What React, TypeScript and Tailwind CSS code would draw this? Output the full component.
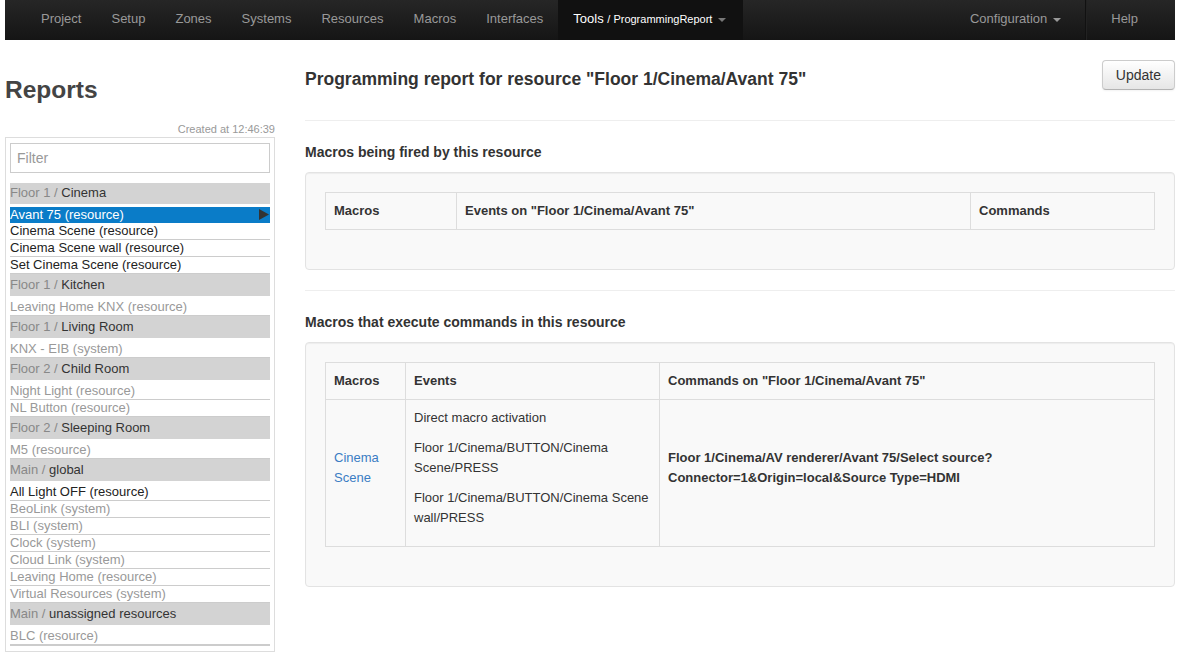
import React from "react";

type Item = { label: string; dark?: boolean; selected?: boolean };
type Group = { prefix: string; name: string; items: Item[] };

const groups: Group[] = [
    {
        prefix: "Floor 1",
        name: "Cinema",
        items: [
            { label: "Avant 75 (resource)", selected: true },
            { label: "Cinema Scene (resource)", dark: true },
            { label: "Cinema Scene wall (resource)", dark: true },
            { label: "Set Cinema Scene (resource)", dark: true },
        ],
    },
    { prefix: "Floor 1", name: "Kitchen", items: [{ label: "Leaving Home KNX (resource)" }] },
    { prefix: "Floor 1", name: "Living Room", items: [{ label: "KNX - EIB (system)" }] },
    {
        prefix: "Floor 2",
        name: "Child Room",
        items: [{ label: "Night Light (resource)" }, { label: "NL Button (resource)" }],
    },
    { prefix: "Floor 2", name: "Sleeping Room", items: [{ label: "M5 (resource)" }] },
    {
        prefix: "Main",
        name: "global",
        items: [
            { label: "All Light OFF (resource)", dark: true },
            { label: "BeoLink (system)" },
            { label: "BLI (system)" },
            { label: "Clock (system)" },
            { label: "Cloud Link (system)" },
            { label: "Leaving Home (resource)" },
            { label: "Virtual Resources (system)" },
        ],
    },
    { prefix: "Main", name: "unassigned resources", items: [{ label: "BLC (resource)" }] },
];

const navLeft = ["Project", "Setup", "Zones", "Systems", "Resources", "Macros", "Interfaces"];

const Caret: React.FC<{ color: string }> = ({ color }) => (
    <span
        className="inline-block ml-[6px] w-0 h-0 border-l-[4px] border-r-[4px] border-t-[4px] border-l-transparent border-r-transparent align-middle"
        style={{ borderTopColor: color }}
    />
);

const Navbar: React.FC = () => (
    <div className="ml-[5px] w-[1170px] h-[40px] bg-linear-to-b from-[#262626] to-[#151515] flex justify-between text-[13px]">
        <div className="flex ml-[21px]">
            {navLeft.map((n) => (
                <div key={n} className="px-[15px] leading-[38px] text-[#999]">
                    {n}
                </div>
            ))}
            <div className="px-[15px] leading-[38px] bg-[#111] text-white">
                Tools <span className="text-[11px]">/ ProgrammingReport</span>
                <Caret color="#777" />
                <span className="inline-block w-[2px]" />
            </div>
        </div>
        <div className="flex mr-[22px]">
            <div className="px-[15px] leading-[38px] text-[#999]">
                Configuration
                <Caret color="#999" />
            </div>
            <div className="mx-[9px] h-[40px] border-l border-[#111] border-r border-r-[#222]" />
            <div className="px-[15px] leading-[38px] text-[#999]">Help</div>
        </div>
    </div>
);

const Sidebar: React.FC = () => (
    <div className="w-[270px] shrink-0">
        <h3 className="mt-[30px] text-[24.5px] leading-[40px] font-bold text-[#444]">Reports</h3>
        <div className="mt-[11px] text-right text-[11px] leading-[16px] text-[#999]">Created at 12:46:39</div>
        <div className="border border-[#ddd] px-[4px] pt-[5px] pb-[5px]">
            <div className="h-[30px] border border-[#ccc] bg-white flex items-center px-[6px] text-[14px] text-[#999]">
                Filter
            </div>
            <div className="mt-[10px]">
                {groups.map((g, gi) => (
                    <div key={gi}>
                        <div
                            className={`${
                                gi === 0 ? "h-[21px] leading-[20px]" : "h-[22px] leading-[22px]"
                            } bg-[#d3d3d3] mb-[3px] text-[13px]`}
                        >
                            <span className="text-[#888]">{g.prefix} / </span>
                            <span className="text-[#333]">{g.name}</span>
                        </div>
                        {g.items.map((it, ii) => {
                            const last = gi === groups.length - 1 && ii === g.items.length - 1;
                            if (it.selected) {
                                return (
                                    <div
                                        key={ii}
                                        className="h-[16px] leading-[15px] bg-[#0a7cc8] text-white text-[13px] flex justify-between"
                                    >
                                        <span>{it.label}</span>
                                        <svg width="11" height="11" viewBox="0 0 11 11" className="mr-[1px] mt-[2px]">
                                            <path d="M1 0 L11 5.5 L1 11 Z" fill="#333" />
                                        </svg>
                                    </div>
                                );
                            }
                            return (
                                <div
                                    key={ii}
                                    className={`leading-[16px] text-[13px] ${
                                        last ? "border-b-2 border-[#ccc] h-[18px]" : "border-b border-[#ccc] h-[17px]"
                                    } ${it.dark ? "text-[#222]" : "text-[#999]"}`}
                                >
                                    {it.label}
                                </div>
                            );
                        })}
                    </div>
                ))}
            </div>
        </div>
    </div>
);

const th = "border border-[#ddd] px-[8px] py-[8px] text-left font-bold leading-[20px] align-middle";
const td = "border border-[#ddd] px-[8px] pt-[8px] pb-[8px] leading-[20px] align-middle";

const App: React.FC = () => {
    return (
        <div className="min-h-[660px] bg-white font-['Liberation_Sans',Arial,sans-serif] text-[#333] text-[13px]">
            <Navbar />
            <div className="ml-[5px] w-[1170px] flex gap-[30px]">
                <Sidebar />
                <div className="flex-1">
                    <div className="pt-[20px] flex justify-between items-start">
                        <h4 className="mt-[9px] text-[17.5px] leading-[20px] font-bold text-[#333]">
                            Programming report for resource "Floor 1/Cinema/Avant 75"
                        </h4>
                        <button className="h-[30px] px-[13px] text-[14px] text-[#333] rounded-[4px] border border-[#ccc] border-b-[#b3b3b3] bg-linear-to-b from-white to-[#e6e6e6] shadow-[inset_0_1px_0_rgba(255,255,255,0.2),0_1px_2px_rgba(0,0,0,0.05)]">
                            Update
                        </button>
                    </div>
                    <div className="mt-[30px] border-t border-[#eee]" />
                    <h5 className="mt-[21px] mb-[10px] text-[14px] leading-[20px] font-bold text-[#333]">
                        Macros being fired by this resource
                    </h5>
                    <div className="bg-[#f9f9f9] border border-[#e3e3e3] rounded-[4px] p-[19px] shadow-[inset_0_1px_1px_rgba(0,0,0,0.05)]">
                        <table className="w-full table-fixed border-collapse mb-[20px]">
                            <colgroup>
                                <col className="w-[131px]" />
                                <col className="w-[514px]" />
                                <col />
                            </colgroup>
                            <thead>
                                <tr>
                                    <th className={th}>Macros</th>
                                    <th className={th}>Events on "Floor 1/Cinema/Avant 75"</th>
                                    <th className={th}>Commands</th>
                                </tr>
                            </thead>
                        </table>
                    </div>
                    <div className="mt-[20px] border-t border-[#eee]" />
                    <h5 className="mt-[21px] mb-[10px] text-[14px] leading-[20px] font-bold text-[#333]">
                        Macros that execute commands in this resource
                    </h5>
                    <div className="bg-[#f9f9f9] border border-[#e3e3e3] rounded-[4px] p-[19px] shadow-[inset_0_1px_1px_rgba(0,0,0,0.05)]">
                        <table className="w-full table-fixed border-collapse mb-[20px]">
                            <colgroup>
                                <col className="w-[80px]" />
                                <col className="w-[254px]" />
                                <col />
                            </colgroup>
                            <thead>
                                <tr>
                                    <th className={th}>Macros</th>
                                    <th className={th}>Events</th>
                                    <th className={th}>Commands on "Floor 1/Cinema/Avant 75"</th>
                                </tr>
                            </thead>
                            <tbody>
                                <tr>
                                    <td className={td}>
                                        <p className="mb-[10px] text-[#3b7dc4]">Cinema Scene</p>
                                    </td>
                                    <td className={td}>
                                        <p className="mb-[10px]">Direct macro activation</p>
                                        <p className="mb-[10px]">Floor 1/Cinema/BUTTON/Cinema Scene/PRESS</p>
                                        <p className="mb-[10px]">Floor 1/Cinema/BUTTON/Cinema Scene wall/PRESS</p>
                                    </td>
                                    <td className={td}>
                                        <p className="mb-[10px] font-bold">
                                            Floor 1/Cinema/AV renderer/Avant 75/Select source?
                                            Connector=1&amp;Origin=local&amp;Source Type=HDMI
                                        </p>
                                    </td>
                                </tr>
                            </tbody>
                        </table>
                    </div>
                </div>
            </div>
        </div>
    );
};

export default App;
